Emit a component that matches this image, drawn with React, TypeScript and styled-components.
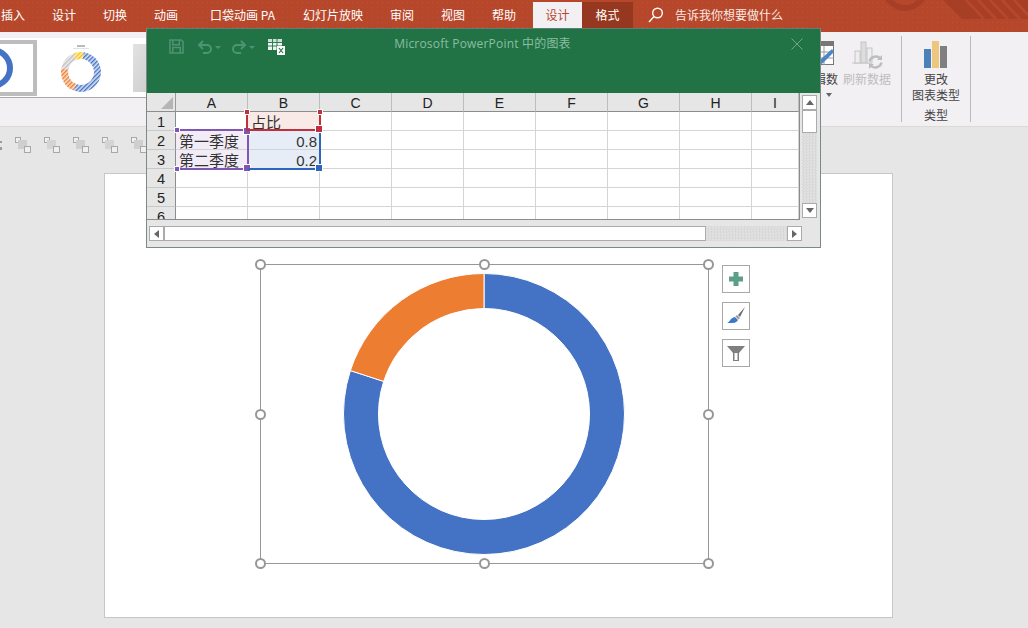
import React from "react";
import styled, {createGlobalStyle} from "styled-components";

const GlobalStyle = createGlobalStyle`
	html, body {
		margin: 0;
		padding: 0;
		width: 1028px;
		height: 628px;
		overflow: hidden;
		background: #e6e6e6;
	}
	* {
		box-sizing: border-box;
	}
`;

const CJK = `"Noto Sans CJK SC", "Noto Sans", sans-serif`;
const LATIN_CJK = `"Open Sans", "Noto Sans CJK SC", sans-serif`;

const Page = styled.div`
	position: relative;
	width: 1028px;
	height: 628px;
	overflow: hidden;
	font-family: ${CJK};
	background: #e6e6e6;
`;

/* top tab bar */
const TitleBar = styled.div`
	position: relative;
	height: 32px;
	background-color: #b7472a;
	background-image: radial-gradient(rgba(255, 255, 255, 0.07) 0.8px, transparent 1px);
	background-size: 5px 5px;
	display: flex;
	align-items: flex-end;
	overflow: hidden;
`;

const Tabs = styled.div`
	display: flex;
	height: 30px;
	margin-left: -12.5px;
`;

const tabPadding = ($state?: string, $wide?: boolean) => {
	if ($wide) return "0 14.5px 4px 18.5px";
	if ($state === "active") return "0 12.5px 4px";
	return "0 13.5px 4px";
};

const Tab = styled.div<{$state?: "active" | "format"; $wide?: boolean}>`
	display: flex;
	align-items: center;
	justify-content: center;
	padding: ${({$state, $wide}) => tabPadding($state, $wide)};
	margin-left: ${({$state}) => ($state === "active" ? 3.5 : 0)}px;
	font-size: 12px;
	line-height: 1;
	white-space: nowrap;
	color: ${({$state}) => ($state === "active" ? "#b7472a" : "#ffffff")};
	background: ${({$state}) =>
		$state === "active" ? "#f3f0f4" : $state === "format" ? "#96371f" : "transparent"};
`;

const SearchHint = styled.div`
	display: flex;
	align-items: center;
	gap: 11px;
	height: 30px;
	padding: 0 0 4px 15px;
	font-size: 12px;
	line-height: 1;
	color: #fbe9e3;
`;

const TitleArt = styled.svg`
	position: absolute;
	top: 0;
	right: 0;
`;

/* ribbon */
const Ribbon = styled.div`
	height: 95px;
	background: #f3f0f4;
	border-bottom: 1px solid #d9dcd3;
	display: flex;
	align-items: flex-start;
`;

const Gallery = styled.div`
	flex: 1;
	height: 60px;
	margin-top: 6px;
	background: #fff;
	border-bottom: 1px solid #a9a9a9;
	display: flex;
	align-items: flex-start;
	padding-top: 2px;
	overflow: hidden;
`;

const SelectedThumb = styled.div`
	width: 37px;
	height: 56px;
	border: 4px solid #bdbdbd;
	border-left: 0;
	background: #fff;
	display: flex;
	align-items: center;
`;

const Thumb = styled.div`
	margin-left: 21px;
	width: 46px;
	height: 56px;
	display: flex;
	align-items: center;
	justify-content: center;
`;

const GreyThumb = styled.div`
	margin: 4px 0 0 29px;
	width: 30px;
	height: 48px;
	background: linear-gradient(120deg, #e2e2e2, #c9c9c9);
`;

const RibbonTool = styled.div<{$width: number; $muted?: boolean}>`
	width: ${({$width}) => $width}px;
	display: flex;
	flex-direction: column;
	align-items: center;
	font-size: 12px;
	line-height: 16px;
	color: ${({$muted}) => ($muted ? "#bdbdbd" : "#444")};
	text-align: center;
	padding-top: 8px;
	white-space: nowrap;
`;

const ToolIcon = styled.svg`
	display: block;
	height: 30px;
	margin-bottom: 1px;
`;

const ChartTypeIcon = styled.svg`
	display: block;
	height: 27px;
	margin: 1px 0 3px;
`;

const CaretLine = styled.div`
	display: flex;
	align-items: center;
	gap: 6px;
`;

const DownCaret = styled.div`
	width: 0;
	height: 0;
	border: 3px solid transparent;
	border-top: 4px solid #666;
	border-bottom: 0;
`;

const GroupSeparator = styled.div<{$left: number}>`
	width: 1px;
	height: 86px;
	margin: 4px 0 0 ${({$left}) => $left}px;
	background: #b9bdb9;
`;

const GroupColumn = styled.div`
	width: 68px;
	display: flex;
	flex-direction: column;
	align-items: center;
`;

const GroupLabel = styled.div`
	font-size: 12px;
	line-height: 16px;
	color: #444;
	margin-top: 4px;
`;

const RibbonTail = styled.div`
	width: 57px;
`;

/* arrange toolbar under the ribbon */
const Workspace = styled.div`
	height: 501px;
	display: flex;
	flex-direction: column;
`;

const MiniBar = styled.div`
	height: 46px;
	padding-top: 10px;
	display: flex;
	align-items: flex-start;
	gap: 13px;
`;

const Slide = styled.div`
	margin-left: 104px;
	width: 789px;
	height: 445px;
	background: #fff;
	border: 1px solid #c6c6c6;
	padding: 90px 0 0 155px;
	display: flex;
	align-items: flex-start;
`;

const ChartFrame = styled.div`
	position: relative;
	width: 449px;
	height: 300px;
	border: 1px solid #979797;
	padding-right: 1px;
	display: flex;
	align-items: center;
	justify-content: center;
`;

const Handle = styled.div<{$x: "l" | "c" | "r"; $y: "t" | "m" | "b"}>`
	position: absolute;
	width: 11px;
	height: 11px;
	border-radius: 50%;
	background: #fff;
	border: 2px solid #979797;
	left: ${({$x}) => ($x === "l" ? "-6px" : $x === "c" ? "calc(50% - 5.5px)" : "calc(100% - 5px)")};
	top: ${({$y}) => ($y === "t" ? "-6px" : $y === "m" ? "calc(50% - 5.5px)" : "calc(100% - 5px)")};
`;

const ChartTools = styled.div`
	margin: 1px 0 0 13px;
	display: flex;
	flex-direction: column;
	gap: 9px;
`;

const ChartTool = styled.div`
	width: 28px;
	height: 28px;
	background: #fff;
	border: 1px solid #a8a8a8;
	display: flex;
	align-items: center;
	justify-content: center;
`;

/* embedded Excel window */
const ExcelWindow = styled.div`
	position: absolute;
	left: 146px;
	top: 28px;
	width: 675px;
	height: 220px;
	background: #e6e6e6;
	border: 1px solid #7b8a84;
	border-top-color: #5f7f76;
	display: flex;
	flex-direction: column;
`;

const ExcelHeader = styled.div`
	position: relative;
	height: 64px;
	background: #217346;
	flex-shrink: 0;
	display: flex;
	justify-content: center;
	padding: 6px 2px 0 0;
`;

const ExcelTitle = styled.div`
	font-family: ${LATIN_CJK};
	font-size: 12px;
	line-height: 18px;
	letter-spacing: 0.2px;
	color: #8abda1;
`;

const QuickBar = styled.div`
	position: absolute;
	left: 22px;
	top: 9px;
	display: flex;
	align-items: center;
	gap: 13px;
`;

const QuickGroup = styled.div`
	display: flex;
	align-items: center;
	gap: 10px;
`;

const CloseMark = styled.svg`
	position: absolute;
	right: 17px;
	top: 9px;
`;

const SheetRow = styled.div`
	display: flex;
	height: 127px;
	flex-shrink: 0;
`;

const Sheet = styled.div`
	position: relative;
	width: 653px;
	height: 127px;
	overflow: hidden;
	background: #fff;
	border-bottom: 1px solid #8c8c8c;
	border-right: 1px solid #8c8c8c;
	display: grid;
	grid-template-columns: 29px repeat(8, 72px) 47px;
	grid-auto-rows: 19px;
`;

const Corner = styled.div`
	background: #e6e6e6;
	border-right: 1px solid #9a9a9a;
	border-bottom: 1px solid #8c8c8c;
	position: relative;
	&::after {
		content: "";
		position: absolute;
		right: 2px;
		bottom: 2px;
		border-style: solid;
		border-width: 0 0 12px 12px;
		border-color: transparent transparent #b5b5b5 transparent;
	}
`;

const ColHead = styled.div`
	background: #e6e6e6;
	border-right: 1px solid #bdbdbd;
	border-bottom: 1px solid #8c8c8c;
	padding-top: 1px;
	font-family: "Liberation Sans", sans-serif;
	font-size: 14px;
	line-height: 18px;
	text-align: center;
	color: #222;
`;

const RowHead = styled.div`
	background: #e6e6e6;
	border-right: 1px solid #8c8c8c;
	border-bottom: 1px solid #c8c8c8;
	padding-top: 1px;
	font-family: "Liberation Sans", sans-serif;
	font-size: 14.6px;
	line-height: 19px;
	text-align: center;
	color: #222;
`;

const Cell = styled.div<{$tint?: string; $right?: boolean}>`
	background: ${({$tint}) => $tint || "#fff"};
	border-right: 1px solid #d4d4d4;
	border-bottom: 1px solid #d4d4d4;
	padding: 1px 2px 0 3px;
	font-family: "Liberation Sans", ${CJK};
	font-size: 15px;
	line-height: 19px;
	color: #333;
	white-space: nowrap;
	overflow: hidden;
	text-align: ${({$right}) => ($right ? "right" : "left")};
`;

const RefRange = styled.div<{$color: string; $left: number; $top: number; $width: number; $height: number; $open: string[]}>`
	position: absolute;
	left: ${({$left}) => $left}px;
	top: ${({$top}) => $top}px;
	width: ${({$width}) => $width}px;
	height: ${({$height}) => $height}px;
	border: 2.5px solid ${({$color}) => $color};
	${({$open}) => $open.map((side) => `border-${side}-color: transparent;`).join("")}
`;

const RefHandle = styled.div<{$color: string; $at: string; $small?: boolean}>`
	position: absolute;
	width: ${({$small}) => ($small ? 4 : 6)}px;
	height: ${({$small}) => ($small ? 4 : 6)}px;
	background: ${({$color}) => $color};
	box-shadow: 0 0 0 1px #fff;
	${({$at}) => ($at.includes("t") ? "top: -3px;" : "bottom: -3px;")}
	${({$at}) => ($at.includes("l") ? "left: -3px;" : "right: -3px;")}
`;

const VScroll = styled.div`
	width: 15px;
	height: 123px;
	margin: 2px 0 0 2px;
	display: flex;
	flex-direction: column;
	background: repeating-conic-gradient(#d8d8d8 0 25%, #e2e2e2 0 50%) 0 0 / 3px 3px;
`;

const ScrollButton = styled.div`
	flex-shrink: 0;
	width: 15px;
	height: 15px;
	background: #fff;
	border: 1px solid #ababab;
	display: flex;
	align-items: center;
	justify-content: center;
`;

const VThumb = styled.div`
	width: 15px;
	height: 23px;
	background: #fff;
	border: 1px solid #ababab;
`;

const TrackFill = styled.div`
	flex: 1;
`;

const HScroll = styled.div`
	height: 15px;
	width: 653px;
	margin: 6px 0 0 2px;
	display: flex;
	background: repeating-conic-gradient(#d8d8d8 0 25%, #e2e2e2 0 50%) 0 0 / 3px 3px;
`;

const HThumb = styled.div`
	width: 542px;
	height: 15px;
	background: #fff;
	border: 1px solid #ababab;
`;

const Arrow = styled.div<{$dir: "up" | "down" | "left" | "right"}>`
	width: 0;
	height: 0;
	border-style: solid;
	border-color: transparent;
	${({$dir}) => {
		switch ($dir) {
			case "up":
				return "border-width: 0 4.5px 5px; border-bottom-color: #666;";
			case "down":
				return "border-width: 5px 4.5px 0; border-top-color: #666;";
			case "left":
				return "border-width: 4.5px 5px 4.5px 0; border-right-color: #666;";
			default:
				return "border-width: 4.5px 0 4.5px 5px; border-left-color: #666;";
		}
	}}
`;

const polar = (cx: number, cy: number, r: number, turn: number) => {
	const a = turn * Math.PI * 2 - Math.PI / 2;
	return [cx + r * Math.cos(a), cy + r * Math.sin(a)];
};

const ringSlice = (cx: number, cy: number, outer: number, inner: number, from: number, to: number) => {
	const large = to - from > 0.5 ? 1 : 0;
	const [x1, y1] = polar(cx, cy, outer, from);
	const [x2, y2] = polar(cx, cy, outer, to);
	const [x3, y3] = polar(cx, cy, inner, to);
	const [x4, y4] = polar(cx, cy, inner, from);
	return `M${x1} ${y1}A${outer} ${outer} 0 ${large} 1 ${x2} ${y2}L${x3} ${y3}A${inner} ${inner} 0 ${large} 0 ${x4} ${y4}Z`;
};

const Doughnut = () => (
	<svg width="284" height="284" viewBox="0 0 284 284">
		<path d={ringSlice(142, 142, 140.5, 105.5, 0, 0.8)} fill="#4472c4" stroke="#fff" strokeWidth="1" />
		<path d={ringSlice(142, 142, 140.5, 105.5, 0.8, 1)} fill="#ed7d31" stroke="#fff" strokeWidth="1" />
	</svg>
);

const hatch = (id: string, back: string, line: string) => (
	<pattern id={id} width="3" height="3" patternUnits="userSpaceOnUse" patternTransform="rotate(45)">
		<rect width="3" height="3" fill={back} />
		<rect width="1.4" height="3" fill={line} />
	</pattern>
);

const StripedDonut = () => (
	<svg width="46" height="56" viewBox="0 0 46 56">
		<defs>
			{hatch("blueHatch", "#dbe4f4", "#4472c4")}
			{hatch("orangeHatch", "#fbe1cf", "#ed7d31")}
			{hatch("greyHatch", "#eeeeee", "#bdbdbd")}
			{hatch("goldHatch", "#fff0c4", "#ffc000")}
		</defs>
		<path d={ringSlice(23, 32, 20, 13, 0.02, 0.56)} fill="url(#blueHatch)" />
		<path d={ringSlice(23, 32, 20, 13, 0.56, 0.78)} fill="url(#orangeHatch)" />
		<path d={ringSlice(23, 32, 20, 13, 0.78, 0.94)} fill="url(#greyHatch)" />
		<path d={ringSlice(23, 32, 20, 13, 0.94, 1.02)} fill="url(#goldHatch)" />
		<rect x="19" y="5" width="8" height="2" fill="#bbb" />
		<rect x="15" y="8" width="16" height="1" fill="#e2e2e2" />
	</svg>
);

const MiniIcon = ({variant}: {variant: number}) => (
	<svg width="16" height="16" viewBox="0 0 16 16">
		<rect x="0.5" y="0.5" width="5" height="5" fill="#f0f0f0" stroke="#a8a8a8" />
		<rect x="3" y="3" width="9" height="9" fill={variant % 2 ? "#d4d4d4" : "#cfcfcf"} />
		<rect x="9.5" y="9.5" width="6" height="6" fill="#efefef" stroke="#a8a8a8" />
	</svg>
);

const SaveIcon = () => (
	<svg width="15" height="15" viewBox="0 0 16 16" fill="none" stroke="#4f9472" strokeWidth="1.6">
		<path d="M1 1h12l2 2v12H1z" />
		<path d="M4 1v5h7V1M4 15V9h8v6" />
	</svg>
);

const UndoIcon = ({flip}: {flip?: boolean}) => (
	<svg width="24" height="14" viewBox="0 0 24 14" fill="none">
		<g transform={flip ? "translate(16 0) scale(-1 1)" : undefined} stroke="#4f9472" strokeWidth="2">
			<path d="M2 5h8a4 4 0 0 1 0 8H6" />
			<path d="M6 1L2 5l4 4" />
		</g>
		<path d="M18 6l3 3 3-3z" fill="#4f9472" />
	</svg>
);

const SheetIcon = () => (
	<svg width="17" height="17" viewBox="0 0 17 17">
		<rect x="0" y="1" width="14" height="11" fill="#eef4f0" />
		<rect x="0" y="1" width="14" height="3" fill="#cfe0d6" />
		<path d="M0 4.5h14M0 8h14M4.5 1v11M9 1v11" stroke="#2f7d52" strokeWidth="1" />
		<rect x="9" y="8" width="8" height="9" fill="#fff" />
		<path d="M11 10l4 5M15 10l-4 5" stroke="#217346" strokeWidth="1.2" />
	</svg>
);

const Scope = () => (
	<svg width="16" height="16" viewBox="0 0 16 16" fill="none" stroke="#fff" strokeWidth="1.4">
		<circle cx="9.5" cy="6" r="4.8" />
		<path d="M6 9.5L1 15" />
	</svg>
);

const COLS = ["A", "B", "C", "D", "E", "F", "G", "H", "I"];
const TINT_RED = "#f9e9e7";
const TINT_PURPLE = "#f1ecf6";
const TINT_BLUE = "#e7edf6";

const rows: {label: string; a?: string; b?: string; aTint?: string; bTint?: string; right?: boolean}[] = [
	{label: "1", b: "占比", bTint: TINT_RED},
	{label: "2", a: "第一季度", b: "0.8", aTint: TINT_PURPLE, bTint: TINT_BLUE, right: true},
	{label: "3", a: "第二季度", b: "0.2", aTint: TINT_PURPLE, bTint: TINT_BLUE, right: true},
	{label: "4"},
	{label: "5"},
	{label: "6"}
];

const RED = "#c0303c";
const PURPLE = "#7f57b2";
const BLUE = "#2f66bb";

const App: React.FC = () => {
	return (
		<Page>
			<GlobalStyle />
			<TitleBar>
				<TitleArt width="160" height="32" viewBox="0 0 160 32" fill="none">
					<circle cx="37" cy="-12" r="20" stroke="#a63f25" strokeWidth="6" />
					<path d="M75 0h85v19H94z" fill="#a63f25" />
					<path d="M98 0l18 19M110 0l18 19M122 0l18 19M134 0l18 19M146 0l14 15" stroke="#b7472a" strokeWidth="3" />
				</TitleArt>
				<Tabs>
					<Tab>插入</Tab>
					<Tab>设计</Tab>
					<Tab>切换</Tab>
					<Tab>动画</Tab>
					<Tab $wide>口袋动画 PA</Tab>
					<Tab>幻灯片放映</Tab>
					<Tab>审阅</Tab>
					<Tab>视图</Tab>
					<Tab>帮助</Tab>
					<Tab $state="active">设计</Tab>
					<Tab $state="format">格式</Tab>
				</Tabs>
				<SearchHint>
					<Scope />
					告诉我你想要做什么
				</SearchHint>
			</TitleBar>

			<Ribbon>
				<Gallery>
					<SelectedThumb>
						<svg width="33" height="48" viewBox="0 0 33 48">
							<circle cx="-8" cy="24" r="18" fill="none" stroke="#4472c4" strokeWidth="6" />
						</svg>
					</SelectedThumb>
					<Thumb>
						<StripedDonut />
					</Thumb>
					<GreyThumb />
				</Gallery>
				<RibbonTool $width={36}>
					<ToolIcon viewBox="0 0 28 30" width="28">
						<rect x="0.5" y="1.5" width="27" height="23" fill="#fff" stroke="#777" />
						<rect x="0" y="1" width="28" height="5" fill="#777" />
						<path d="M0 12h28M0 18h28M9 6v19M18 6v19" stroke="#999" />
						<path d="M12 26l2-6L26 9l2 3-11 11z" fill="#4a86c5" />
					</ToolIcon>
					编辑数
					<CaretLine>
						据
						<DownCaret />
					</CaretLine>
				</RibbonTool>
				<RibbonTool $width={58} $muted>
					<ToolIcon viewBox="0 0 32 30" width="32">
						<path d="M1 23h20" stroke="#c4c4c4" />
						<rect x="4" y="11" width="5" height="12" fill="#eee" stroke="#c4c4c4" />
						<rect x="10" y="2" width="5" height="21" fill="#ddd" stroke="#c4c4c4" />
						<rect x="16" y="8" width="5" height="15" fill="#eee" stroke="#c4c4c4" />
						<path d="M18.5 21.5a6.5 6.5 0 0 1 11-3M30.5 22.5a6.5 6.5 0 0 1-11 3" fill="none" stroke="#bdbdbd" strokeWidth="2.4" />
						<path d="M31 15v5h-5zM18 29v-5h5z" fill="#bdbdbd" />
					</ToolIcon>
					刷新数据
				</RibbonTool>
				<GroupSeparator $left={5} />
				<GroupColumn>
					<RibbonTool $width={68}>
						<ChartTypeIcon viewBox="0 0 24 27" width="24">
							<rect x="0" y="8" width="7" height="19" fill="#4d82b8" />
							<rect x="8" y="0" width="7" height="27" fill="#eec77f" />
							<rect x="16" y="5" width="7" height="22" fill="#7f7f7f" />
						</ChartTypeIcon>
						更改
						<br />
						图表类型
					</RibbonTool>
					<GroupLabel>类型</GroupLabel>
				</GroupColumn>
				<GroupSeparator $left={0} />
				<RibbonTail />
			</Ribbon>

			<Workspace>
				<MiniBar>
					<svg width="2" height="16" viewBox="0 0 2 16">
						<path d="M0 4h2v2H0zM0 10h2v3H0z" fill="#9a9a9a" />
					</svg>
					{[0, 1, 2, 3, 4].map((i) => (
						<MiniIcon key={i} variant={i} />
					))}
				</MiniBar>
				<Slide>
					<ChartFrame>
						<Doughnut />
						<Handle $x="l" $y="t" />
						<Handle $x="c" $y="t" />
						<Handle $x="r" $y="t" />
						<Handle $x="l" $y="m" />
						<Handle $x="r" $y="m" />
						<Handle $x="l" $y="b" />
						<Handle $x="c" $y="b" />
						<Handle $x="r" $y="b" />
					</ChartFrame>
					<ChartTools>
						<ChartTool>
							<svg width="16" height="16" viewBox="0 0 16 16">
								<path d="M5.5 1h5v4.5H15v5h-4.5V15h-5v-4.5H1v-5h4.5z" fill="#5c9e87" />
							</svg>
						</ChartTool>
						<ChartTool>
							<svg width="20" height="20" viewBox="0 0 20 20">
								<path d="M19 1l-7 8 2 2z" fill="#6d6d6d" />
								<path d="M11 9l3 3-1.5 1.5-3-3z" fill="#9a9a9a" />
								<path d="M9 11l3 3c-1 2-3 3-5 3H1c3-1 3-5 8-6z" fill="#3f78c4" />
							</svg>
						</ChartTool>
						<ChartTool>
							<svg width="20" height="20" viewBox="0 0 20 20">
								<path d="M1 3h18l-6 7v8H7v-8z" fill="#7f7f7f" />
								<path d="M8.5 10h3v7h-3z" fill="#fff" />
							</svg>
						</ChartTool>
					</ChartTools>
				</Slide>
			</Workspace>

			<ExcelWindow>
				<ExcelHeader>
					<QuickBar>
						<SaveIcon />
						<QuickGroup>
							<UndoIcon />
							<UndoIcon flip />
						</QuickGroup>
						<SheetIcon />
					</QuickBar>
					<ExcelTitle>Microsoft PowerPoint 中的图表</ExcelTitle>
					<CloseMark width="12" height="12" viewBox="0 0 12 12" stroke="#6fa88a" strokeWidth="1">
						<path d="M0.5 0.5l11 11M11.5 0.5l-11 11" />
					</CloseMark>
				</ExcelHeader>
				<SheetRow>
					<Sheet>
						<Corner />
						{COLS.map((c) => (
							<ColHead key={c}>{c}</ColHead>
						))}
						{rows.map((r) => (
							<React.Fragment key={r.label}>
								<RowHead>{r.label}</RowHead>
								<Cell $tint={r.aTint}>{r.a}</Cell>
								<Cell $tint={r.bTint} $right={r.right}>
									{r.b}
								</Cell>
								{COLS.slice(2).map((c) => (
									<Cell key={c} />
								))}
							</React.Fragment>
						))}
						<RefRange $color={PURPLE} $left={29} $top={36} $width={73} $height={41} $open={["left"]}>
							<RefHandle $color={PURPLE} $at="tl" $small />
							<RefHandle $color={PURPLE} $at="bl" $small />
							<RefHandle $color={PURPLE} $at="tr" />
							<RefHandle $color={PURPLE} $at="br" />
						</RefRange>
						<RefRange $color={BLUE} $left={100} $top={36} $width={74} $height={41} $open={["top", "left"]}>
							<RefHandle $color={BLUE} $at="br" />
						</RefRange>
						<RefRange $color={RED} $left={99} $top={18} $width={75} $height={20} $open={["top"]}>
							<RefHandle $color={RED} $at="tl" $small />
							<RefHandle $color={RED} $at="tr" $small />
							<RefHandle $color={RED} $at="br" />
						</RefRange>
					</Sheet>
					<VScroll>
						<ScrollButton>
							<Arrow $dir="up" />
						</ScrollButton>
						<VThumb />
						<TrackFill />
						<ScrollButton>
							<Arrow $dir="down" />
						</ScrollButton>
					</VScroll>
				</SheetRow>
				<HScroll>
					<ScrollButton>
						<Arrow $dir="left" />
					</ScrollButton>
					<HThumb />
					<TrackFill />
					<ScrollButton>
						<Arrow $dir="right" />
					</ScrollButton>
				</HScroll>
			</ExcelWindow>
		</Page>
	);
};

export default App;
